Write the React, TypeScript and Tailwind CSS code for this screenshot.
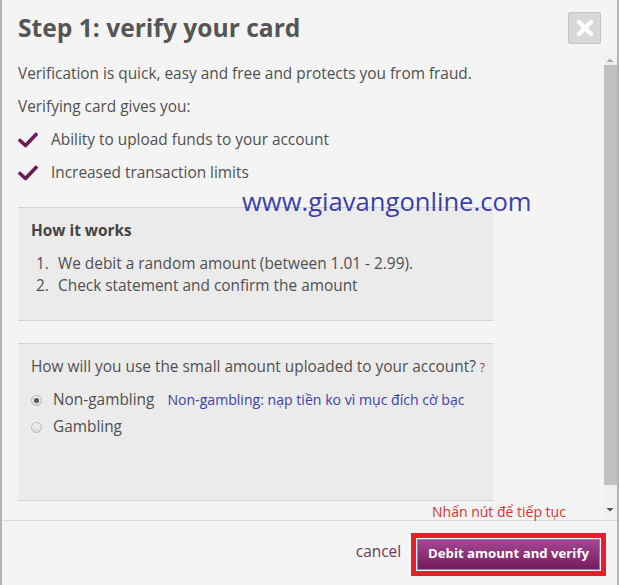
import React from 'react';

function Check() {
    return (
        <svg width="20" height="16" viewBox="0 0 20 16" className="shrink-0">
            <path
                d="M2 8.5 L7.5 13.5 L18 2.5"
                fill="none"
                stroke="#6b1a55"
                strokeWidth="3.6"
                strokeLinecap="round"
                strokeLinejoin="round"
            />
        </svg>
    );
}

function Radio({ checked }: { checked?: boolean }) {
    return (
        <span className="flex h-[11px] w-[11px] shrink-0 items-center justify-center rounded-full border border-[#b5b5b5] bg-gradient-to-b from-[#f2f2f2] to-[#dadada]">
            {checked && <span className="h-[5px] w-[5px] rounded-full bg-[#555]" />}
        </span>
    );
}

function Scrollbar() {
    return (
        <div className="flex w-[14px] shrink-0 flex-col items-center bg-[#f0f0f0] pb-[6px]">
            <svg width="8" height="9" viewBox="0 0 8 9" className="mt-[1px]">
                <path d="M0.5 6 L4 2.5 L7.5 6 Z" fill="#a8a8a8" />
            </svg>
            <div className="w-[13px] flex-1 bg-[#c1c1c1]" />
            <div className="h-[20px]" />
            <svg width="8" height="9" viewBox="0 0 8 9">
                <path d="M0.5 3 L4 6.5 L7.5 3 Z" fill="#505050" />
            </svg>
        </div>
    );
}

export default function App() {
    return (
        <div
            className="relative flex h-[585px] w-[619px] flex-col overflow-hidden border-x-2 border-[#b4b4b4] bg-[#f4f4f4] text-[#505050]"
            style={{ fontFamily: '"Open Sans", "Noto Sans", sans-serif' }}
        >
            <div className="flex h-[55px] shrink-0 items-start justify-between pl-[16px] pr-[16px]">
                <h1 className="mt-[10px] text-[24.6px] font-bold leading-[36px] text-[#555]">
                    Step 1: verify your card
                </h1>
                <button className="mt-[12px] flex h-[32px] w-[33px] items-center justify-center rounded-[2px] border border-[#c6c6c6] bg-[#d8d8d8]">
                    <svg width="18" height="18" viewBox="0 0 18 18">
                        <path
                            d="M3 3 L15 15 M15 3 L3 15"
                            stroke="#fff"
                            strokeWidth="4.4"
                            strokeLinecap="round"
                        />
                    </svg>
                </button>
            </div>

            <div className="flex h-[465px] shrink-0">
                <div className="relative w-[601px] shrink-0 pl-[16px] pr-[110px] text-[15.4px] leading-[22px]">
                    <p className="mt-[8px]">
                        Verification is quick, easy and free and protects you from fraud.
                    </p>
                    <p className="mt-[11px]">Verifying card gives you:</p>
                    <ul className="mt-[11px] flex flex-col gap-[11px]">
                        <li className="flex items-center gap-[13px]">
                            <Check />
                            Ability to upload funds to your account
                        </li>
                        <li className="flex items-center gap-[13px]">
                            <Check />
                            Increased transaction limits
                        </li>
                    </ul>

                    <div className="mt-[23px] h-[114px] border-y border-[#d2d2d2] bg-[#ebebeb] px-[13px] pt-[12px]">
                        <div className="font-bold text-[#444]">How it works</div>
                        <ol className="mt-[11px]">
                            <li className="flex">
                                <span className="w-[27px] pl-[5px]">1.</span>
                                We debit a random amount (between 1.01 - 2.99).
                            </li>
                            <li className="flex">
                                <span className="w-[27px] pl-[5px]">2.</span>
                                Check statement and confirm the amount
                            </li>
                        </ol>
                    </div>

                    <div className="mt-[22px] h-[158px] border-y border-[#d2d2d2] bg-[#ebebeb] px-[13px] pt-[12px]">
                        <div className="whitespace-nowrap">
                            How will you use the small amount uploaded to your account?{' '}
                            <span className="text-[12px] text-[#9a3a4a]">?</span>
                        </div>
                        <div className="mt-[10px] flex items-center whitespace-nowrap">
                            <span className="mr-[11px]">
                                <Radio checked />
                            </span>
                            <span>Non-gambling</span>
                            <span className="ml-[13px] text-[14.1px] text-[#3b3fae]">
                                Non-gambling: nạp tiền ko vì mục đích cờ bạc
                            </span>
                        </div>
                        <div className="mt-[5px] flex items-center">
                            <span className="mr-[11px]">
                                <Radio />
                            </span>
                            <span>Gambling</span>
                        </div>
                    </div>

                    <div className="pl-[414px] text-[14px] whitespace-nowrap text-[#d8322e]">
                        Nhấn nút để tiếp tục
                    </div>

                    <div className="absolute left-[240px] top-[132px] text-[25.6px] leading-[30px] whitespace-nowrap text-[#3a3fb0]">
                        www.giavangonline.com
                    </div>
                </div>
                <Scrollbar />
            </div>

            <div className="flex flex-1 items-center justify-end gap-[10px] border-t border-[#dcdcdc] pr-[11px]">
                <span className="mb-[2px] text-[15.4px] text-[#6b3a5e]">cancel</span>
                <div className="mt-[2px] border-[5px] border-[#e3202c] p-[1px]">
                    <button className="h-[31px] border border-[#c06aae] bg-gradient-to-b from-[#a44794] to-[#761a5f] px-[10px] text-[13.2px] font-bold text-white">
                        Debit amount and verify
                    </button>
                </div>
            </div>
        </div>
    );
}
